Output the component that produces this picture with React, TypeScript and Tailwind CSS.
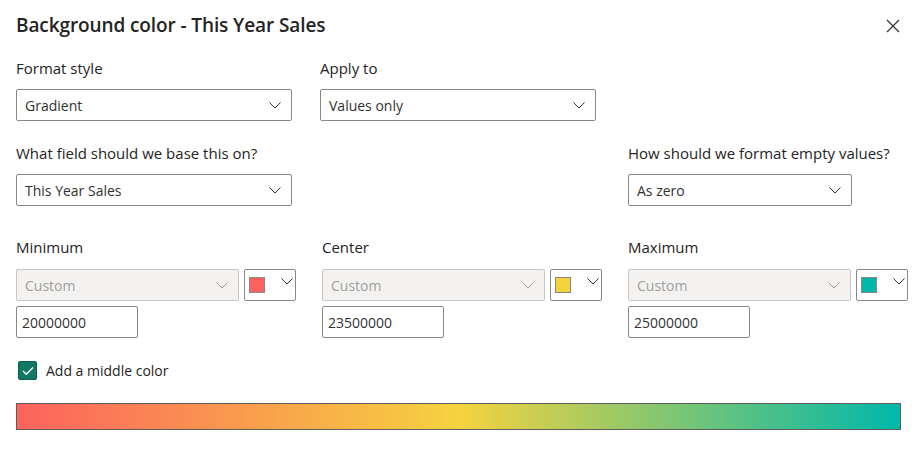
import React from "react";

const font = { fontFamily: '"Segoe UI", "Open Sans", "Noto Sans", sans-serif' };

function Chevron({ className = "" }: { className?: string }) {
  return (
    <svg width="12" height="7" viewBox="0 0 12 7" className={className} fill="none">
      <path d="M0.5 0.5 L6 6 L11.5 0.5" stroke="currentColor" strokeWidth="1" />
    </svg>
  );
}

function Select({ value, w }: { value: string; w: string }) {
  return (
    <div className={`${w} h-[32px] border border-[#8a8886] rounded-[2px] flex items-center justify-between pl-[8px] pr-[10px] text-[14px] text-[#323130]`}>
      <span>{value}</span>
      <Chevron className="text-[#323130]" />
    </div>
  );
}

function Label({ children }: { children: React.ReactNode }) {
  return <div className="text-[15px] leading-[20px] text-[#252423] h-[20px]">{children}</div>;
}

function ColorGroup({ label, color, value }: { label: string; color: string; value: string }) {
  return (
    <div className="w-[306px] shrink-0 flex flex-col">
      <Label>{label}</Label>
      <div className="flex gap-[5px] mt-[12px]">
        <div className="w-[223px] h-[32px] border border-[#c8c6c4] bg-[#f3f2f1] rounded-[2px] flex items-center justify-between pl-[8px] pr-[10px] text-[14px] text-[#a19f9d]">
          <span>Custom</span>
          <Chevron className="text-[#a19f9d]" />
        </div>
        <div className="w-[52px] h-[32px] border border-[#8a8886] rounded-[2px] flex items-start pl-[4px] pt-[7px] gap-[16px]">
          <div className="w-[16px] h-[16px] border border-[#8a8886]" style={{ background: color }} />
          <Chevron className="text-[#323130] mt-[1px]" />
        </div>
      </div>
      <div className="mt-[5px] w-[122px] h-[32px] border border-[#8a8886] rounded-[2px] flex items-center pl-[5px] text-[14px] text-[#323130]">
        {value}
      </div>
    </div>
  );
}

export default function App() {
  return (
    <div className="w-[924px] h-[469px] bg-white relative overflow-hidden" style={font}>
      <div className="pl-[16px] pt-[11px]">
        <div className="flex items-center h-[28px]">
          <div className="text-[19px] font-semibold text-[#252423] leading-[28px] tracking-[-0.1px]">Background color - This Year Sales</div>
        </div>
        <button className="absolute right-[24px] top-[19px] text-[#323130]">
          <svg width="14" height="14" viewBox="0 0 14 14" fill="none">
            <path d="M1 1 L13 13 M13 1 L1 13" stroke="currentColor" strokeWidth="1.2" />
          </svg>
        </button>

        <div className="flex mt-[19px]">
          <div className="w-[304px] shrink-0">
            <Label>Format style</Label>
            <div className="mt-[11px]"><Select value="Gradient" w="w-[276px]" /></div>
          </div>
          <div>
            <Label>Apply to</Label>
            <div className="mt-[11px]"><Select value="Values only" w="w-[276px]" /></div>
          </div>
        </div>

        <div className="flex mt-[22px]">
          <div className="w-[612px] shrink-0">
            <Label>What field should we base this on?</Label>
            <div className="mt-[11px]"><Select value="This Year Sales" w="w-[276px]" /></div>
          </div>
          <div>
            <Label>How should we format empty values?</Label>
            <div className="mt-[11px]"><Select value="As zero" w="w-[224px]" /></div>
          </div>
        </div>

        <div className="flex mt-[31px]">
          <ColorGroup label="Minimum" color="#fd625e" value="20000000" />
          <ColorGroup label="Center" color="#f5d33f" value="23500000" />
          <ColorGroup label="Maximum" color="#01b8aa" value="25000000" />
        </div>

        <div className="flex items-center mt-[22px] ml-[2px] gap-[9px]">
          <div className="w-[19px] h-[19px] bg-[#117865] border border-[#0b5d4e] rounded-[2px] flex items-center justify-center">
            <svg width="12" height="10" viewBox="0 0 12 10" fill="none">
              <path d="M1 5 L4.3 8.3 L11 1.5" stroke="white" strokeWidth="1.3" />
            </svg>
          </div>
          <span className="text-[14px] text-[#252423]">Add a middle color</span>
        </div>

        <div
          className="mt-[22px] w-[885px] h-[27px] border border-[#605e5c]"
          style={{ background: "linear-gradient(to right, #fd625e 0%, #f5d33f 50%, #01b8aa 100%)" }}
        />
      </div>
    </div>
  );
}
